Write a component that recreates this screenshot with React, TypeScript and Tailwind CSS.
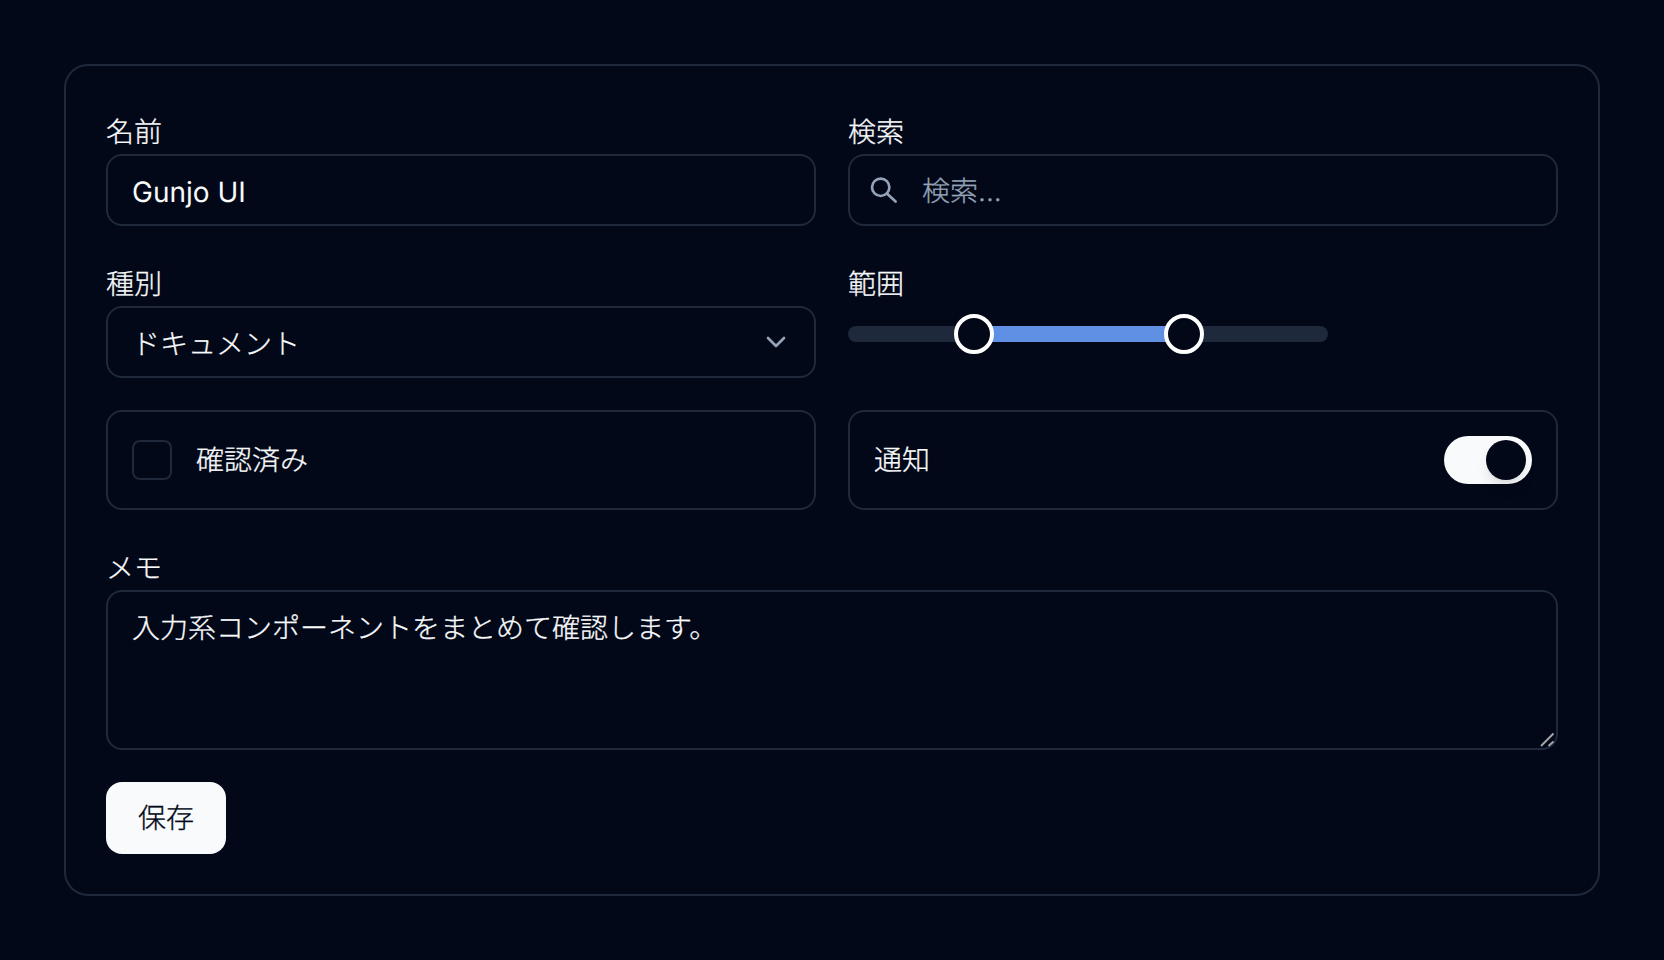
import { ChevronDown } from "lucide-react";

const font = "font-['Inter','Noto_Sans_CJK_JP',sans-serif] [text-rendering:geometricPrecision]";
const cjk = "font-light [-webkit-text-stroke:0.3px]";

function Label({ children }: { children: React.ReactNode }) {
  return <label className={`block h-10 text-[28px] leading-[52px] text-[#f8fafc] ${cjk}`}>{children}</label>;
}

const field =
  "h-[72px] w-full rounded-2xl border-2 border-[#1e293b] bg-transparent text-[28px] leading-10 text-[#f8fafc] outline-none";

export default function App() {
  return (
    <div className={`min-h-screen bg-[#020817] p-16 ${font}`}>
      <div className="flex flex-col gap-8 rounded-3xl border-2 border-[#1e293b] p-10">
        <div className="grid grid-cols-2 gap-8">
          <div className="flex flex-col gap-2">
            <Label>名前</Label>
            <input className={`${field} px-6 pt-1 ${font}`} defaultValue="Gunjo UI" />
          </div>
          <div className="flex flex-col gap-2">
            <Label>検索</Label>
            <div className="relative">
              <svg
                viewBox="0 0 32 32"
                fill="none"
                stroke="currentColor"
                strokeWidth="2.67"
                strokeLinecap="round"
                className="absolute left-[22px] top-5 size-8 text-[#94a3b8]"
              >
                <circle cx="10.7" cy="13.3" r="8.67" />
                <path d="M16.9 19.5 25.6 27.6" />
              </svg>
              <input
                className={`${field} pl-[72px] pr-6 pt-0.5 placeholder:text-[#94a3b8] ${cjk} ${font}`}
                placeholder="検索..."
              />
            </div>
          </div>
          <div className="flex flex-col gap-2">
            <Label>種別</Label>
            <div className={`${field} flex items-center justify-between pl-6 pr-[22px]`}>
              <span className={`pt-1 ${cjk}`}>ドキュメント</span>
              <ChevronDown size={32} className="text-[#94a3b8]" />
            </div>
          </div>
          <div className="flex flex-col gap-2">
            <Label>範囲</Label>
            <div className="relative mt-2 flex h-10 w-[480px] items-center">
              <div className="relative h-4 w-full overflow-hidden rounded-full bg-[#1e293b]">
                <div className="absolute inset-y-0 left-[26%] w-[44%] bg-[#6090e3]" />
              </div>
              <span className="absolute left-[106px] top-0 size-10 rounded-full border-4 border-white bg-[#020817]" />
              <span className="absolute left-[316px] top-0 size-10 rounded-full border-4 border-white bg-[#020817]" />
            </div>
          </div>
          <div className="flex items-center gap-6 rounded-2xl border-2 border-[#1e293b] p-6">
            <span className="size-10 rounded-lg border-2 border-[#1e293b]" />
            <span className={`text-[28px] leading-10 text-[#f8fafc] ${cjk}`}>確認済み</span>
          </div>
          <div className="flex items-center justify-between rounded-2xl border-2 border-[#1e293b] p-6">
            <span className={`text-[28px] leading-10 text-[#f8fafc] ${cjk}`}>通知</span>
            <span className="flex h-12 w-[88px] items-center justify-end rounded-full bg-[#f8fafc] py-1 pr-1.5">
              <span className="size-10 rounded-full bg-[#020817] shadow-lg" />
            </span>
          </div>
        </div>
        <div className="flex flex-col gap-2">
          <Label>メモ</Label>
          <div className="relative">
            <textarea
              className={`block h-40 w-full resize-none rounded-2xl border-2 border-[#1e293b] bg-transparent px-6 py-4 text-[28px] leading-10 text-[#f8fafc] outline-none ${cjk} ${font}`}
              defaultValue="入力系コンポーネントをまとめて確認します。"
            />
            <svg
              viewBox="0 0 16 16"
              fill="none"
              stroke="#a3a3a3"
              strokeWidth="2"
              className="absolute bottom-[2px] right-[2px] size-4"
            >
              <path d="M1 14 13.5 1.5M8.5 14 13.5 9.5" />
            </svg>
          </div>
        </div>
        <div>
          <button className={`h-[72px] w-[120px] rounded-2xl bg-[#f8fafc] text-[28px] leading-10 text-[#020817] ${cjk} ${font}`}>
            保存
          </button>
        </div>
      </div>
    </div>
  );
}
